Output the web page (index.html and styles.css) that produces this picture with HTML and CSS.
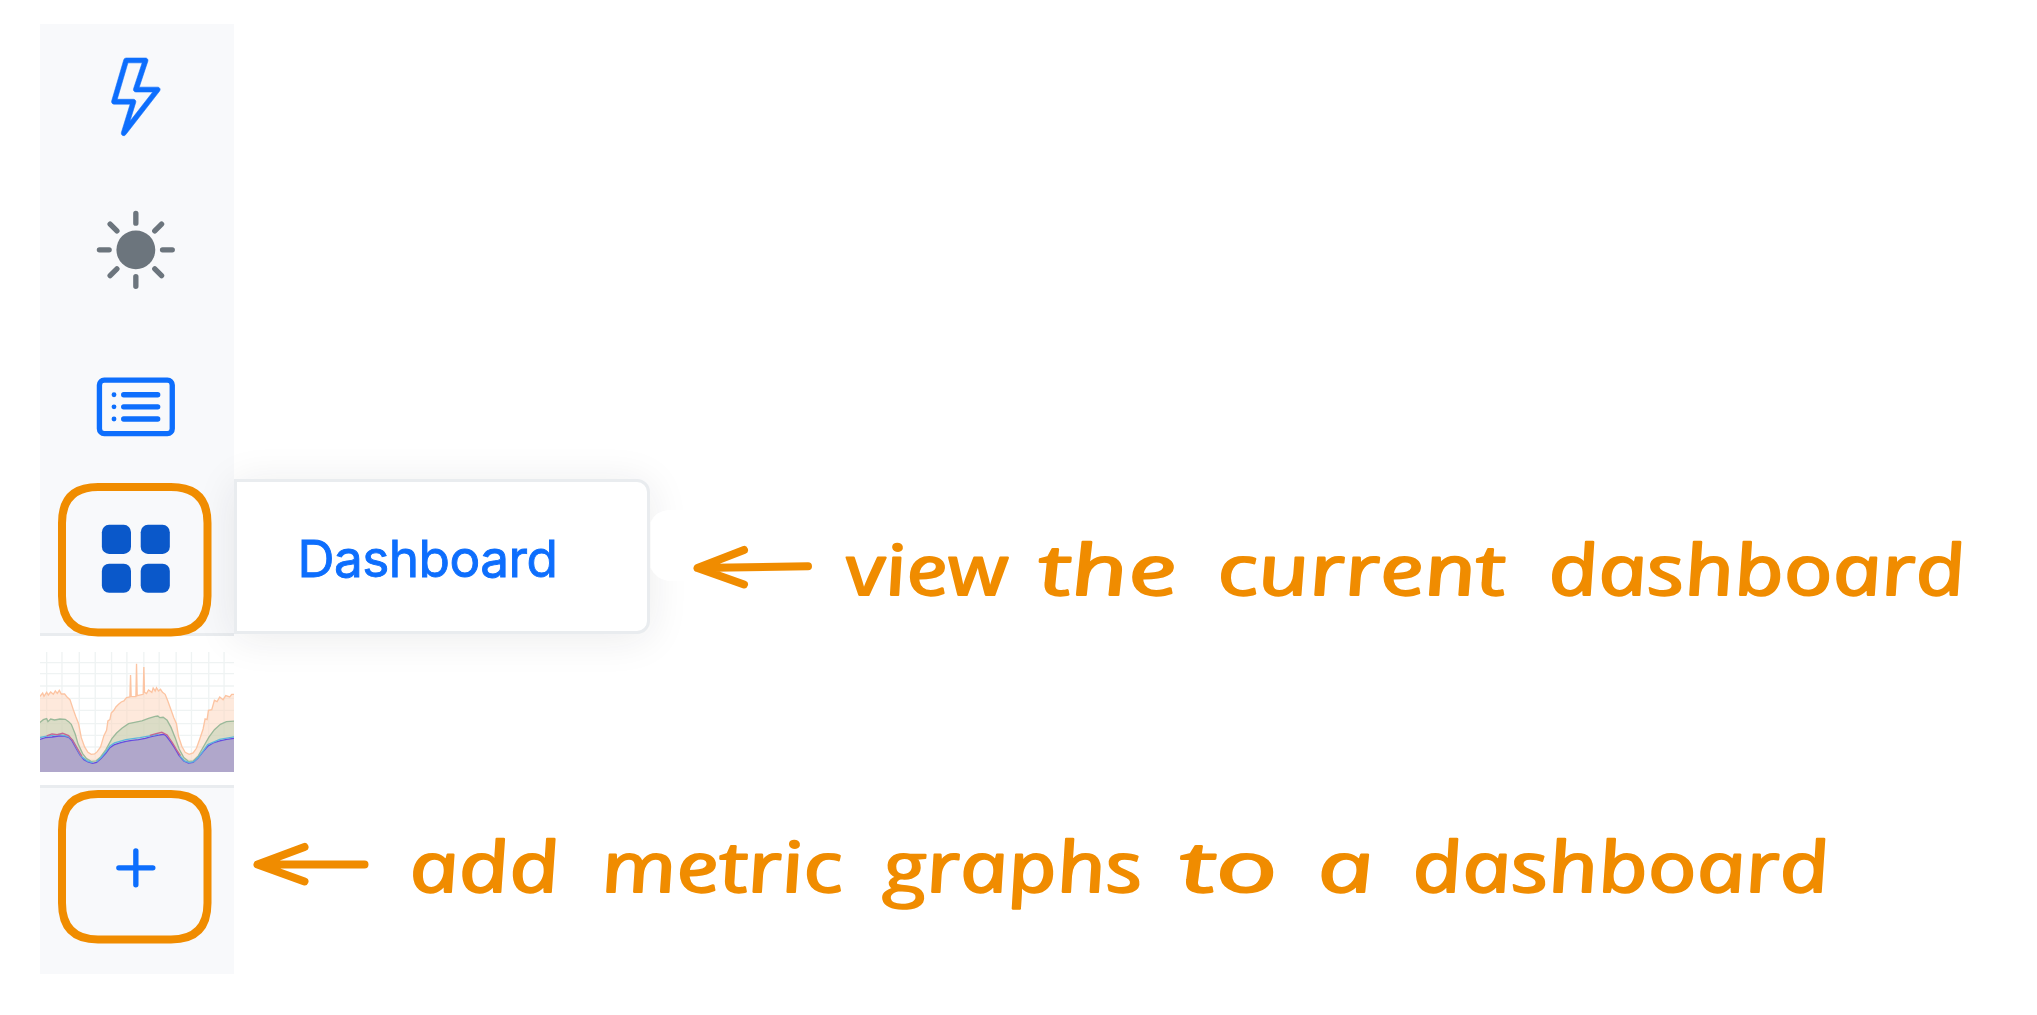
FILE: index.html
```html
<!DOCTYPE html>
<html lang="en">
<head>
<meta charset="utf-8">
<title>Dashboard sidebar</title>
<link rel="stylesheet" href="styles.css">
</head>
<body>
<div class="page">
  <aside class="sidebar">
    <nav class="nav">
      <svg class="icon icon-bolt" viewBox="0 0 16 16"><path d="M5.52.359A.5.5 0 0 1 6 0h4a.5.5 0 0 1 .474.658L8.694 6H12.5a.5.5 0 0 1 .395.807l-7 9a.5.5 0 0 1-.873-.454L6.823 9.5H3.5a.5.5 0 0 1-.48-.641zM6.374 1 4.168 8.5H7.5a.5.5 0 0 1 .478.647L6.78 13.04 11.478 7H8a.5.5 0 0 1-.474-.658L9.306 1z"/></svg>
      <svg class="icon icon-sun" viewBox="0 0 16 16"><circle cx="8" cy="8" r="4"/><path class="rays" d="M8 .5v2M8 13.5v2M.5 8h2M13.5 8h2M2.7 2.7l1.4 1.4M11.9 11.9l1.4 1.4M2.7 13.3l1.4-1.4M11.9 4.1l1.4-1.4"/></svg>
      <svg class="icon icon-list" viewBox="0 0 16 16"><rect class="frame" x=".5" y="2.5" width="15" height="11" rx="1"/><path class="rays" d="M5.5 5.5h7M5.5 8h7M5.5 10.5h7"/><circle cx="3.5" cy="5.5" r=".5"/><circle cx="3.5" cy="8" r=".5"/><circle cx="3.5" cy="10.5" r=".5"/></svg>
      <div class="marked">
        <svg class="icon icon-grid" viewBox="0 0 16 16"><rect x="1" y="1" width="6" height="6" rx="1.5"/><rect x="9" y="1" width="6" height="6" rx="1.5"/><rect x="1" y="9" width="6" height="6" rx="1.5"/><rect x="9" y="9" width="6" height="6" rx="1.5"/></svg>
        <svg class="ring" viewBox="0 0 154 154"><path d="M40 4H113Q149.500 4 149.500 40V113Q149.500 149.500 113 149.500H40Q4 149.500 4 113V40Q4 4 40 4Z"/></svg>
      </div>
    </nav>
    <div class="preview">
      <svg class="chart" viewBox="30 95 584 361" preserveAspectRatio="none">
        <path class="lines" d="M50 95V456M96 95V456M148 95V456M196 95V456M245 95V456M291 95V456M342 95V456M388 95V456M439 95V456M485 95V456M537 95V456M583 95V456M30 127H614M30 160H614M30 197H614M30 234H614M30 270H614M30 310H614M30 345H614M30 380H614M30 417H614"/>
        <path class="orange" d="M28 230L38 218L42 228L50 216L55 224L62 215L70 222L76 212L82 219L88 210L94 221L104 221L112 231L120 238L130 268L138 290L146 310L154 352L164 380L174 396L184 402L194 401L202 394L212 380L222 346L230 330L234 302L240 298L244 278L252 270L258 260L266 252L274 245L282 242L290 232L300 230L302 164L304 229L318 229L320 130L322 226L340 222L342 140L344 216L350 220L356 209L366 216L370 203L376 212L380 202L386 212L392 207L398 216L406 222L414 242L424 270L432 292L440 310L446 348L456 378L466 396L478 402L490 398L500 384L510 356L520 326L526 296L532 298L536 270L546 268L554 240L562 244L570 230L580 238L588 226L600 230L606 222L616 222V458H28Z"/>
        <path class="green" d="M28 308L40 298L50 295L54 304L62 296L74 299L90 296L106 297L116 304L124 312L136 342L144 370L158 400L170 415L184 423L198 422L212 410L228 388L246 355L260 338L276 324L296 310L314 306L336 302L356 294L376 288L384 287L390 292L400 291L412 300L424 322L436 352L448 386L462 412L476 423L490 422L506 406L524 374L538 350L554 328L572 312L590 304L616 302V458H28Z"/>
        <path class="purple" d="M28 358L46 352L66 350L86 347L100 347L116 351L126 361L138 383L150 404L162 418L174 425L188 429L200 426L214 414L228 398L240 382L252 374L270 368L288 363L306 360L326 358L346 354L364 349L382 345L402 342L410 348L422 364L434 382L448 406L462 422L476 428L490 426L504 414L520 394L534 378L550 368L570 362L590 357L616 354V458H28Z"/>
        <path class="cyan" d="M28 352L46 348L86 342L114 348L128 359L140 382L154 408L172 422L188 427M200 424L214 411L228 394L240 377L254 368L288 358L330 352L364 346L386 341M450 406L464 422L478 427L492 424L506 411L534 373L570 357L616 349"/>
        <path class="pink" d="M50 347L66 341L82 343L98 339L116 346L128 360L142 384L156 408M360 345L376 341L396 336L412 344L428 368L440 388L452 406"/>
      </svg>
    </div>
    <div class="add">
      <div class="marked">
        <svg class="icon icon-plus" viewBox="0 0 16 16"><path class="rays" d="M8 4.500v7M4.500 8h7"/></svg>
        <svg class="ring" viewBox="0 0 154 154"><path d="M40 4H113Q149.500 4 149.500 40V113Q149.500 149.500 113 149.500H40Q4 149.500 4 113V40Q4 4 40 4Z"/></svg>
      </div>
    </div>
  </aside>
  <main class="notes">
    <div class="flyout-row">
      <div class="flyout"><span>Dashboard</span></div>
      <svg class="note note-view" viewBox="650 500 1340 130">
        <path class="blank" d="M650.500 522Q656 511 668 510H690V581H668Q656 579 650.500 568Z"/>
        <path class="arrow" d="M808 566.300L697.500 568L744 550M697.500 568L744 584.500"/>
        <g transform="translate(2 595) skewX(11)">
          <text x="848" textLength="162" lengthAdjust="spacingAndGlyphs">view</text>
          <text x="1040" textLength="139" lengthAdjust="spacingAndGlyphs">the</text>
          <text x="1219" textLength="288" lengthAdjust="spacingAndGlyphs">current</text>
          <text x="1550" textLength="417" lengthAdjust="spacingAndGlyphs">dashboard</text>
        </g>
      </svg>
    </div>
    <svg class="note note-add" viewBox="234 800 1640 150">
      <path class="arrow" d="M364.500 864.500H257.500L304.500 847M257.500 864.500L304.500 881.500"/>
      <g transform="translate(2 892) skewX(11)">
        <text x="411" textLength="150" lengthAdjust="spacingAndGlyphs">add</text>
        <text x="603" textLength="241" lengthAdjust="spacingAndGlyphs">metric</text>
        <text x="884" textLength="260" lengthAdjust="spacingAndGlyphs">graphs</text>
        <text x="1181" textLength="98" lengthAdjust="spacingAndGlyphs">to</text>
        <text x="1319" textLength="56" lengthAdjust="spacingAndGlyphs">a</text>
        <text x="1414" textLength="417" lengthAdjust="spacingAndGlyphs">dashboard</text>
      </g>
    </svg>
  </main>
</div>
</body>
</html>
```
FILE: styles.css
```css
* { box-sizing: border-box; }
body { margin: 0; background: #fff; font-family: Inter, "Liberation Sans", sans-serif; }
svg { display: block; overflow: visible; }
.page { display: flex; width: 2037px; height: 1015px; padding: 24px 0 0 40px; overflow: hidden; }

.sidebar { width: 194.4px; flex: none; }
.nav { height: 612px; padding-top: 34px; background: #f8f9fb; border-bottom: 3.5px solid #e9ecef; display: flex; flex-direction: column; align-items: center; }
.icon { width: 77.7px; height: 77.7px; flex: none; margin-right: 2.4px; fill: #0d6efd; color: #0d6efd; }
.icon-bolt { stroke: currentColor; stroke-width: .12; }
.icon-sun { margin-top: 75.500px; fill: #6c757d; color: #6c757d; }
.icon-list { margin-top: 78.800px; }
.rays, .frame { fill: none; stroke: currentColor; stroke-width: 1.1; stroke-linecap: round; }
.marked { position: relative; display: flex; justify-content: center; align-items: center; width: 153.500px; height: 154px; padding-left: 1px; flex: none; }
.nav .marked { margin: 37.700px 4px 0 0; }
.marked .icon { margin-right: 0; }
.icon-grid { fill: #0a58ca; margin-bottom: 3px; }
.icon-plus { margin-top: 2px; }
.ring { position: absolute; left: 0; top: 0; width: 154px; height: 154px; fill: none; stroke: #f08c00; stroke-width: 8; }

.preview { height: 149px; padding-top: 15.7px; }
.chart { width: 194.4px; height: 120.3px; overflow: hidden; }
.chart path { stroke-width: 4; }
.chart .lines { fill: none; stroke: #eff3f3; }
.orange { fill: rgba(253, 211, 185, .5); stroke: #fcc4a2; }
.green { fill: rgba(184, 208, 175, .5); stroke: #9bb99a; }
.purple { fill: #b0a7cb; stroke: #654be0; }
.cyan { fill: none; stroke: #5eb6dc; }
.pink { fill: none; stroke: #c76691; }
.add { height: 189px; padding-top: 1.5px; background: #f8f9fb; border-top: 3.5px solid #e9ecef; display: flex; justify-content: center; }
.add .marked { margin-right: 4px; }

.notes { flex: 1; padding-top: 455.3px; }
.flyout-row { display: flex; align-items: flex-start; }
.flyout { width: 415.600px; height: 154.300px; flex: none; display: flex; align-items: center; padding: 4px 0 0 60px; background: #fff; border: 3.5px solid #e9ecef; border-radius: 0 13px 13px 0; box-shadow: 0 4px 42px rgba(33, 37, 41, .09); color: #0d6efd; font-size: 51.300px; line-height: 1; letter-spacing: -.5px; -webkit-text-stroke: .9px #0d6efd; }
.note text { font-family: "Open Sans", sans-serif; font-style: italic; font-size: 70px; fill: #f08c00; stroke: #f08c00; stroke-width: 2; stroke-linejoin: round; }
.note-view { width: 1340px; height: 130px; margin-top: 20.700px; flex: none; }
.note-add { width: 1640px; height: 150px; margin-top: 166.400px; }
.arrow { fill: none; stroke: #f08c00; stroke-width: 8; stroke-linecap: round; stroke-linejoin: round; }
.blank { fill: #fff; }
```
